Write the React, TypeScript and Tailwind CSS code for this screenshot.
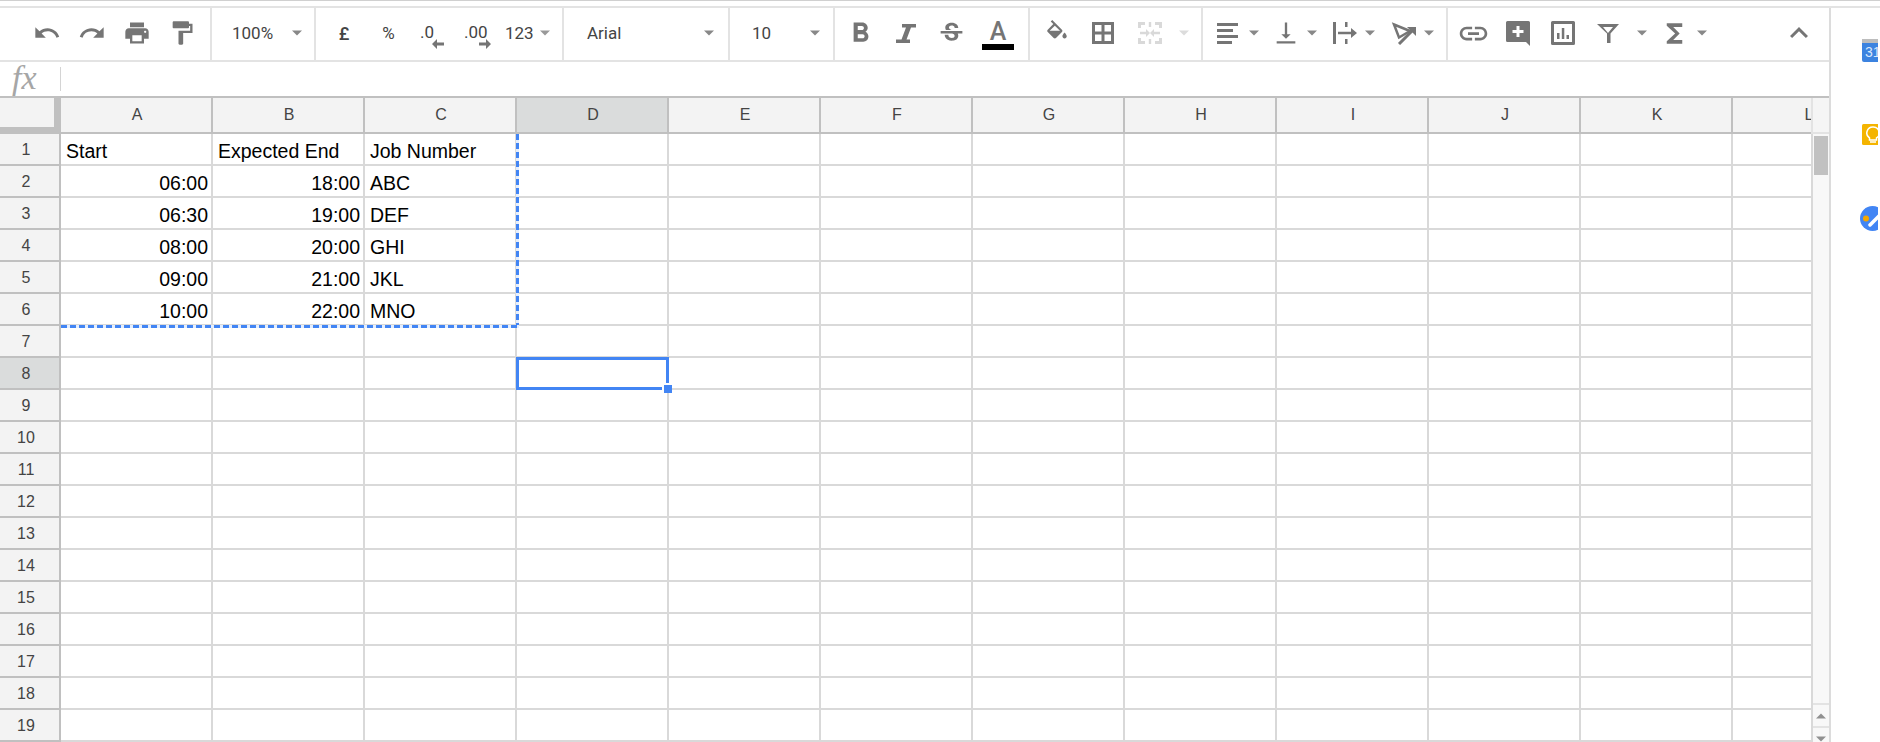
import React from 'react';
import {
  MdUndo, MdRedo, MdPrint, MdFormatPaint, MdFormatBold, MdStrikethroughS,
  MdVerticalAlignBottom, MdLink, MdFunctions, MdExpandLess,
} from 'react-icons/md';

const COLS = ['A', 'B', 'C', 'D', 'E', 'F', 'G', 'H', 'I', 'J', 'K', 'L'];

const DATA: Record<number, string[]> = {
  1: ['Start', 'Expected End', 'Job Number'],
  2: ['06:00', '18:00', 'ABC'],
  3: ['06:30', '19:00', 'DEF'],
  4: ['08:00', '20:00', 'GHI'],
  5: ['09:00', '21:00', 'JKL'],
  6: ['10:00', '22:00', 'MNO'],
};

const Caret: React.FC<{ className?: string }> = ({ className = '' }) => (
  <svg width="10" height="6" viewBox="0 0 10 6" className={`shrink-0 ${className}`}>
    <path d="M0 .5h10L5 5.5z" fill="currentColor" />
  </svg>
);

const Btn: React.FC<{ className: string; children: React.ReactNode }> = ({ className, children }) => (
  <div className={`flex items-center justify-center shrink-0 ${className}`}>{children}</div>
);

const Section: React.FC<{ className: string; children: React.ReactNode }> = ({ className, children }) => (
  <div className={`flex items-center h-full pb-[2px] shrink-0 border-r-2 border-[#e3e3e3] ${className}`}>{children}</div>
);

const ArrowGlyph: React.FC<{ left?: boolean }> = ({ left }) => (
  <svg width="12" height="10" viewBox="0 0 12 10" className="text-[#757575]">
    {left ? <path d="M5 0v3.5h7v3H5V10L0 5z" fill="currentColor" /> : <path d="M7 0v3.5H0v3h7V10l5-5z" fill="currentColor" />}
  </svg>
);

const Toolbar = () => (
  <div className="flex h-[54px] border-b-2 border-[#e3e3e3] text-[#757575] text-[17px] font-['Roboto',sans-serif]">
    <Section className="w-[212px] pl-6">
      <Btn className="w-[45px]"><MdUndo size={28} /></Btn>
      <Btn className="w-[45px]"><MdRedo size={28} /></Btn>
      <Btn className="w-[45px]"><MdPrint size={28} /></Btn>
      <Btn className="w-[45px]"><MdFormatPaint size={28} /></Btn>
    </Section>
    <Section className="w-[104px] pl-5">
      <span className="text-[#444] w-[60px] mt-[1px]">100%</span>
      <Caret className="text-[#888]" />
    </Section>
    <Section className="w-[248px]">
      <Btn className="w-[56px] font-medium text-[#444] text-[18px] mt-[1px]">£</Btn>
      <Btn className="w-[33px] text-[#444] mt-[1px]">%</Btn>
      <div className="w-[44px] shrink-0 flex flex-col items-start pl-[15px] pt-[6px] text-[#444]">
        <span className="leading-[16px]">.0</span>
        <span className="ml-3 -mt-[1px]"><ArrowGlyph left /></span>
      </div>
      <div className="w-[56px] shrink-0 flex flex-col items-start pl-[15px] pt-[6px] text-[#444]">
        <span className="leading-[16px]">.00</span>
        <span className="ml-[15px] -mt-[1px]"><ArrowGlyph /></span>
      </div>
      <span className="text-[#444] w-[35px] mt-[1px]">123</span>
      <Caret className="text-[#999]" />
    </Section>
    <Section className="w-[166px] pl-[23px]">
      <span className="text-[#444] w-[117px] mt-[1px]">Arial</span>
      <Caret className="text-[#888]" />
    </Section>
    <Section className="w-[105px] pl-[22px]">
      <span className="text-[#444] w-[58px] mt-[1px]">10</span>
      <Caret className="text-[#888]" />
    </Section>
    <Section className="w-[195px] pl-[3px]">
      <Btn className="w-[45px]"><MdFormatBold size={33} /></Btn>
      <Btn className="w-[46px]">
        <svg width="20" height="19" viewBox="0 0 20 19">
          <path fill="currentColor" d="M6 0h14v3.500h-5L10.500 15.500H14V19H0v-3.500h5.500L10 3.500H6z" />
        </svg>
      </Btn>
      <Btn className="w-[45px]"><MdStrikethroughS size={29} /></Btn>
      <div className="w-[48px] shrink-0 flex flex-col items-center pt-[5px]">
        <span className="text-[25px] leading-[22px] font-medium">A</span>
        <div className="w-8 h-[6px] bg-black mt-[1px]" />
      </div>
    </Section>
    <Section className="w-[173px]">
      <Btn className="w-[50px] pl-[3px]">
        <svg width="26" height="26" viewBox="0 0 24 24">
          <path fill="currentColor" d="M16.56 8.94L7.62 0 6.21 1.41l2.38 2.38-5.15 5.15c-.59.59-.59 1.54 0 2.12l5.5 5.5c.29.29.68.44 1.06.44s.77-.15 1.06-.44l5.500-5.500c.59-.58.59-1.53 0-2.12zM5.21 10L10 5.21 14.79 10H5.21zM19 11.5s-2 2.17-2 3.5c0 1.1.9 2 2 2s2-.9 2-2c0-1.33-2-3.5-2-3.5z" />
        </svg>
      </Btn>
      <Btn className="w-[46px]">
        <svg width="22" height="22" viewBox="0 0 22 22">
          <path fill="currentColor" fillRule="evenodd" d="M0 0h22v22H0zM3 3v6.500h6.500V3zM12.500 3v6.500H19V3zM3 12.500V19h6.500v-6.500zM12.500 12.500V19H19v-6.500z" />
        </svg>
      </Btn>
      <Btn className="w-[48px]">
        <svg width="24" height="22" viewBox="0 0 24 22" className="text-[#d9d9d9]">
          <path fill="currentColor" d="M0 0h7v3H3v3H0zM17 0h7v6h-3V3h-4zM0 16h3v3h4v3H0zM21 16h3v6h-7v-3h4zM2 9.800h6V7l4 4-4 4v-2.800H2zM22 9.800h-6V7l-4 4 4 4v-2.800h6zM10.800 0h2.400v5h-2.400zM10.800 17h2.400v5h-2.400z" />
        </svg>
      </Btn>
      <Caret className="text-[#dcdcdc] ml-[5px]" />
    </Section>
    <Section className="w-[245px] pl-[14px]">
      <svg width="22" height="21" viewBox="0 0 22 21" className="shrink-0">
        <path fill="currentColor" d="M0 0h21v3H0zM0 6h16v3H0zM0 12h21v3H0zM0 18h15v3H0z" />
      </svg>
      <Caret className="text-[#888] ml-[10px]" />
      <Btn className="w-[36px] ml-[9px]"><MdVerticalAlignBottom size={28} /></Btn>
      <Caret className="text-[#888] ml-[3px]" />
      <svg width="24" height="22" viewBox="0 0 24 22" className="shrink-0 ml-[16px]">
        <path fill="currentColor" d="M0 0h3v22H0zM12 0h2.500v5H12zM12 17h2.500v5H12zM5 9.700h13V6l6 5-6 5v-3.700H5z" />
      </svg>
      <Caret className="text-[#888] ml-[8px]" />
      <svg width="26" height="23" viewBox="0 0 26 23" className="shrink-0 ml-[16px]">
        <path fill="none" stroke="currentColor" strokeWidth="2.500" d="M3 2.500l16 6.500-11 6.500z" />
        <path fill="none" stroke="currentColor" strokeWidth="3" d="M8 22L23 7" />
        <path fill="currentColor" d="M16 5h9v9z" />
      </svg>
      <Caret className="text-[#888] ml-[7px]" />
    </Section>
    <div className="flex items-center h-full pb-[2px] shrink-0 w-[381px] pl-[3px]">
      <Btn className="w-[44px]"><MdLink size={33} /></Btn>
      <Btn className="w-[45px]">
        <svg width="24" height="25" viewBox="0 0 24 25">
          <path fill="currentColor" fillRule="evenodd" d="M1.500 0h21A1.500 1.500 0 0 1 24 1.500V25l-4-4H1.500A1.500 1.500 0 0 1 0 19.500v-18A1.500 1.500 0 0 1 1.500 0zM10.500 5v4h-4v3h4v4h3v-4h4V9h-4V5z" />
        </svg>
      </Btn>
      <Btn className="w-[46px]">
        <svg width="24" height="24" viewBox="0 0 24 24">
          <path fill="currentColor" fillRule="evenodd" d="M0 1.500A1.500 1.500 0 0 1 1.500 0h21A1.500 1.500 0 0 1 24 1.500v21a1.500 1.500 0 0 1-1.500 1.500h-21A1.500 1.500 0 0 1 0 22.500zM3 3v18h18V3zM6 12h2.500v6H6zM10.800 7h2.500v11h-2.500zM15.500 14h2.500v4h-2.500z" />
        </svg>
      </Btn>
      <Btn className="w-[44px]">
        <svg width="22" height="19" viewBox="0 0 22 19">
          <path fill="currentColor" fillRule="evenodd" d="M0 0h22l-8.500 9.500V19h-3.500V9.500zM6 3l5 6 5-6z" />
        </svg>
      </Btn>
      <Caret className="text-[#888] ml-[7px]" />
      <Btn className="w-[32px] ml-[11px]"><MdFunctions size={31} /></Btn>
      <Caret className="text-[#888] ml-[7px]" />
      <Btn className="w-[36px] ml-[74px]"><MdExpandLess size={36} /></Btn>
    </div>
  </div>
);

const FormulaBar = () => (
  <div className="flex items-center h-[34px] bg-white">
    <span className="w-[60px] pl-3 pb-[2px] text-[34px] italic text-[#a6a6a6] font-['Liberation_Serif',serif] leading-none">fx</span>
    <div className="w-px h-[24px] bg-[#d4d4d4]" />
  </div>
);

const HeaderRow = () => (
  <div className="flex h-9">
    <div className="w-[61px] shrink-0 bg-[#f3f3f3] border-r-[7px] border-b-[7px] border-[#c0c0c0]" />
    {COLS.map((c, i) => (
      <div
        key={c}
        className={`w-[152px] shrink-0 flex items-center justify-center pl-[2px] border-r-2 border-b-2 border-[#c0c0c0] ${i === 3 ? 'bg-[#dadcdc]' : 'bg-[#f3f3f3]'}`}
      >
        {c}
      </div>
    ))}
  </div>
);

const Row: React.FC<{ n: number }> = ({ n }) => {
  const row = DATA[n] || [];
  return (
    <div className="flex h-8">
      <div className={`w-[61px] shrink-0 flex items-center justify-center pr-[7px] pt-[2px] border-r-2 border-b-2 border-[#c0c0c0] ${n === 8 ? 'bg-[#dadcdc]' : 'bg-[#f3f3f3]'}`}>
        {n}
      </div>
      {COLS.map((c, i) => {
        const v = row[i];
        const right = v && v.includes(':');
        return (
          <div
            key={c}
            className={`w-[152px] shrink-0 flex items-end whitespace-nowrap overflow-hidden border-r-2 border-b-2 border-[#d9d9d9] text-black text-[19.5px] leading-[23px] pb-[1px] ${right ? 'justify-end pr-[3px]' : 'pl-[5px]'}`}
          >
            {v}
          </div>
        );
      })}
    </div>
  );
};

const Grid = () => (
  <div className="relative flex border-t-2 border-[#c0c0c0] h-[646px]">
    <div className="relative w-[1811px] overflow-hidden text-[16px] text-[#444] font-['Liberation_Sans',Arial,sans-serif]">
      <HeaderRow />
      {Array.from({ length: 19 }, (_, i) => (
        <Row key={i} n={i + 1} />
      ))}
      {/* copy range marching ants */}
      <div className="absolute left-[516px] top-[36px] w-[3px] h-[193px] bg-[repeating-linear-gradient(to_bottom,#4285f4_0,#4285f4_6px,#e6effd_6px,#e6effd_9px)]" />
      <div className="absolute left-[61px] top-[227px] w-[458px] h-[3px] bg-[repeating-linear-gradient(to_right,#4285f4_0,#4285f4_6px,#e6effd_6px,#e6effd_9px)]" />
      {/* active cell */}
      <div className="absolute left-[516px] top-[259px] w-[153px] h-[33px] border-[3px] border-[#4285f4]" />
      <div className="absolute left-[662px] top-[285px] w-2 h-2 box-content bg-[#4285f4] border-l-2 border-t-2 border-white" />
    </div>
    <div className="w-[18px] shrink-0 flex flex-col">
      <div className="h-9 bg-[#f5f5f5] border-l-2 border-b-2 border-[#e3e3e3]" />
      <div className="flex-1 flex flex-col bg-[#f8f8f8] border-l-2 border-[#d9d9d9] pl-[1px]">
        <div className="h-[39px] w-[14px] mt-[2px] bg-[#c1c1c1]" />
        <div className="flex-1" />
        <div className="h-[23px] -ml-[1px] flex items-center justify-center border-t-2 border-[#e3e3e3] text-[#909090]">
          <svg width="10" height="6" viewBox="0 0 10 6"><path d="M0 5.500h10L5 .5z" fill="currentColor" /></svg>
        </div>
        <div className="h-[16px] -ml-[1px] flex items-start pt-[8px] justify-center border-t-2 border-[#e3e3e3] text-[#909090]">
          <Caret />
        </div>
      </div>
    </div>
  </div>
);

const SidePanel = () => (
  <div className="w-[49px] shrink-0 border-l-2 border-[#dcdcdc] pl-[31px] overflow-hidden flex flex-col">
    <div className="w-6 h-[23px] mt-[31px] rounded-b-[2px] bg-[#3c83e0] shrink-0 overflow-hidden">
      <div className="h-[4px] bg-[#bdbdbd]" />
      <div className="text-[14px] leading-[18px] text-[#d9e7fb] pl-[3px] font-['Liberation_Sans',sans-serif]">31</div>
    </div>
    <div className="w-6 h-[21px] mt-[62px] shrink-0">
      <svg width="24" height="21" viewBox="0 0 24 21">
        <rect width="24" height="21" rx="1.500" fill="#f4b400" />
        <path d="M11 3a6 6 0 0 0-3.500 11v2h7v-2A6 6 0 0 0 11 3z" fill="none" stroke="#fff" strokeWidth="1.500" />
        <path d="M8 18h6" stroke="#fff" strokeWidth="1.500" />
        <path d="M17 21l3-4h4v4z" fill="#fad27a" />
      </svg>
    </div>
    <div className="w-6 h-[25px] mt-[61px] -ml-[2px] shrink-0">
      <svg width="25" height="25" viewBox="0 0 25 25">
        <circle cx="12.500" cy="12.500" r="12.500" fill="#4285f4" />
        <circle cx="6" cy="12.500" r="3" fill="#f4a700" />
        <path d="M10 19L22 7" stroke="#fff" strokeWidth="3.500" strokeLinecap="round" />
      </svg>
    </div>
  </div>
);

export default function App() {
  return (
    <div className="w-[1880px] h-[742px] overflow-hidden bg-white">
      <div className="h-px bg-[#d0d0d0]" />
      <div className="h-[5px]" />
      <div className="h-[2px] bg-[#e3e3e3]" />
      <div className="flex h-[734px]">
        <div className="w-[1829px] shrink-0">
          <Toolbar />
          <FormulaBar />
          <Grid />
        </div>
        <SidePanel />
      </div>
    </div>
  );
}
